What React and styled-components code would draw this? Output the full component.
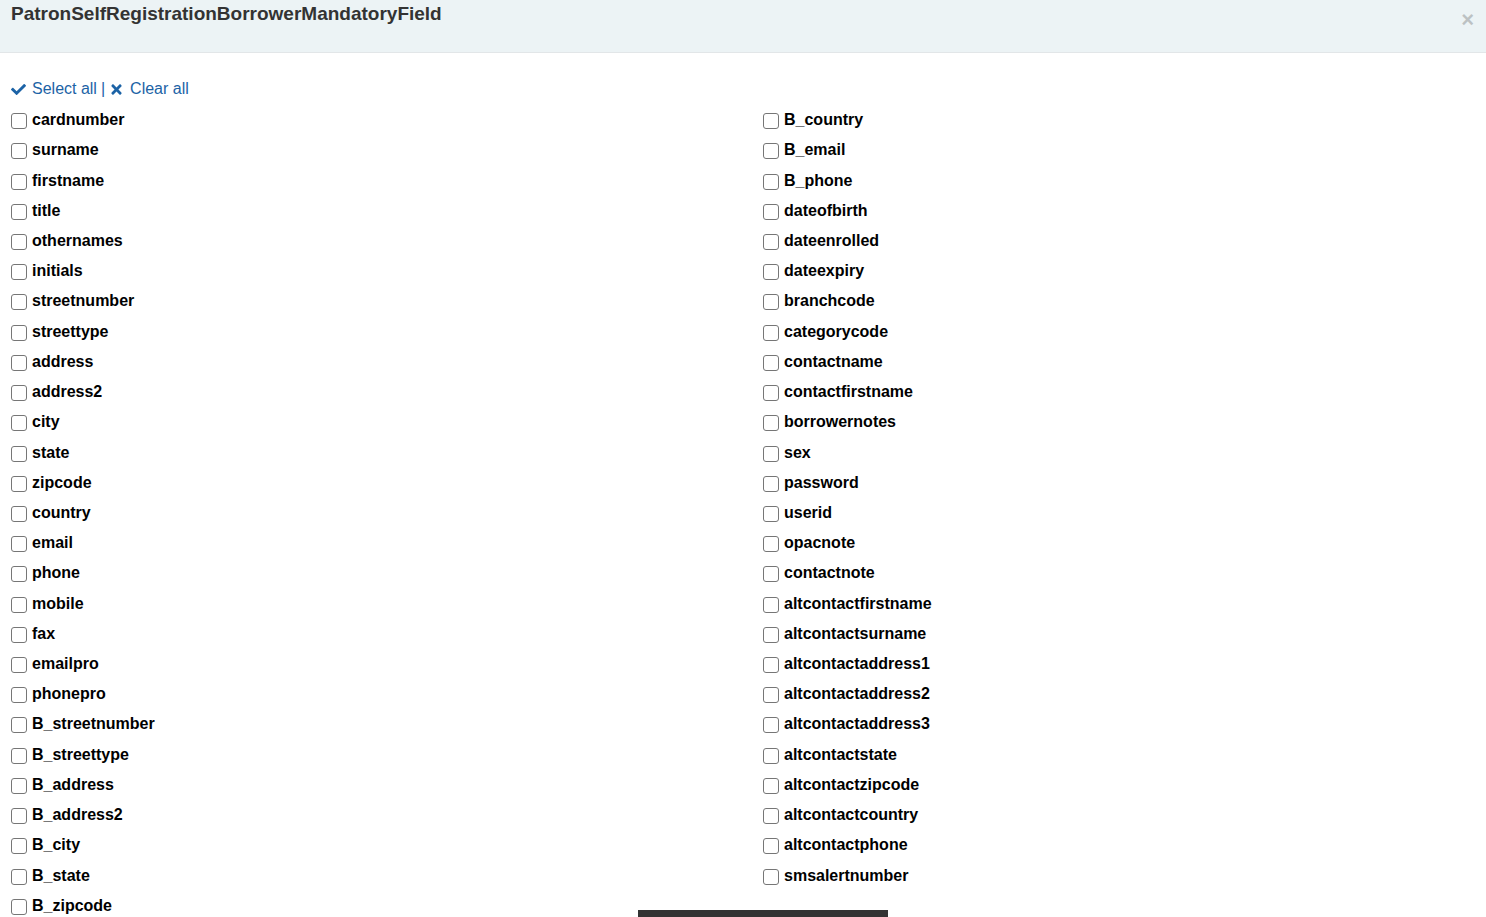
import styled, { createGlobalStyle } from "styled-components";
import { FaCheck, FaTimes } from "react-icons/fa";

const GlobalStyle = createGlobalStyle`
  html, body {
    margin: 0;
    padding: 0;
    background: #ffffff;
    font-family: "Liberation Sans", Arial, sans-serif;
    overflow: hidden;
  }
`;

const leftFields = [
  "cardnumber", "surname", "firstname", "title", "othernames", "initials",
  "streetnumber", "streettype", "address", "address2", "city", "state",
  "zipcode", "country", "email", "phone", "mobile", "fax", "emailpro",
  "phonepro", "B_streetnumber", "B_streettype", "B_address", "B_address2",
  "B_city", "B_state", "B_zipcode",
];

const rightFields = [
  "B_country", "B_email", "B_phone", "dateofbirth", "dateenrolled",
  "dateexpiry", "branchcode", "categorycode", "contactname",
  "contactfirstname", "borrowernotes", "sex", "password", "userid",
  "opacnote", "contactnote", "altcontactfirstname", "altcontactsurname",
  "altcontactaddress1", "altcontactaddress2", "altcontactaddress3",
  "altcontactstate", "altcontactzipcode", "altcontactcountry",
  "altcontactphone", "smsalertnumber",
];

const Header = styled.div`
  box-sizing: border-box;
  height: 53px;
  background: #ecf3f5;
  border-bottom: 1px solid #e2e6e8;
  display: flex;
  justify-content: space-between;
  align-items: flex-start;
  padding: 3px 12px 0 11px;
`;

const Title = styled.h3`
  margin: 0;
  font-size: 19px;
  font-weight: bold;
  color: #333333;
  line-height: 22px;
`;

const CloseButton = styled.button`
  border: 0;
  background: none;
  padding: 0;
  margin-top: 6px;
  font-family: "Liberation Sans", Arial, sans-serif;
  font-size: 22px;
  font-weight: bold;
  line-height: 22px;
  color: #000;
  opacity: 0.2;
  cursor: pointer;
`;

const Body = styled.div`
  padding: 27px 0 0 11px;
`;

const Toolbar = styled.div`
  display: flex;
  align-items: center;
  height: 18px;
  font-size: 16px;
  color: #1c63a6;
  margin-bottom: 7px;
`;

const ToolLink = styled.a`
  display: inline-flex;
  align-items: center;
  gap: 6px;
  color: inherit;
  text-decoration: none;
  cursor: pointer;

  svg {
    width: 15px;
    height: 15px;
  }
`;

const Separator = styled.span`
  margin: 0 4px;
`;

const Columns = styled.div`
  display: grid;
  grid-template-columns: 752px 1fr;
`;

const Column = styled.div`
  display: flex;
  flex-direction: column;
`;

const Row = styled.label`
  display: flex;
  align-items: center;
  height: 30.23px;
  font-size: 16px;
  font-weight: bold;
  color: #000;
  cursor: pointer;
`;

const Box = styled.input`
  appearance: none;
  width: 16px;
  height: 16px;
  margin: 2px 5px 0 0;
  border: 1px solid #767676;
  border-radius: 3px;
  background: #fff;
  flex-shrink: 0;

  &:checked {
    background: #0075ff;
    border-color: #0075ff;
  }
`;

const FooterBar = styled.div`
  position: fixed;
  left: 638px;
  top: 910px;
  width: 250px;
  height: 40px;
  background: #333333;
  color: #fff;
  font-size: 16px;
  text-align: center;
  padding-top: 5px;
  box-sizing: border-box;
`;

const Field = ({ name }) => (
  <Row>
    <Box type="checkbox" name={name} />
    {name}
  </Row>
);

export default function App() {
  return (
    <>
      <GlobalStyle />
      <Header>
        <Title>PatronSelfRegistrationBorrowerMandatoryField</Title>
        <CloseButton aria-label="Close">×</CloseButton>
      </Header>
      <Body>
        <Toolbar>
          <ToolLink>
            <FaCheck />
            Select all
          </ToolLink>
          <Separator>|</Separator>
          <ToolLink>
            <FaTimes />
            Clear all
          </ToolLink>
        </Toolbar>
        <Columns>
          <Column>
            {leftFields.map((f) => (
              <Field key={f} name={f} />
            ))}
          </Column>
          <Column>
            {rightFields.map((f) => (
              <Field key={f} name={f} />
            ))}
          </Column>
        </Columns>
      </Body>
      <FooterBar>Save</FooterBar>
    </>
  );
}
